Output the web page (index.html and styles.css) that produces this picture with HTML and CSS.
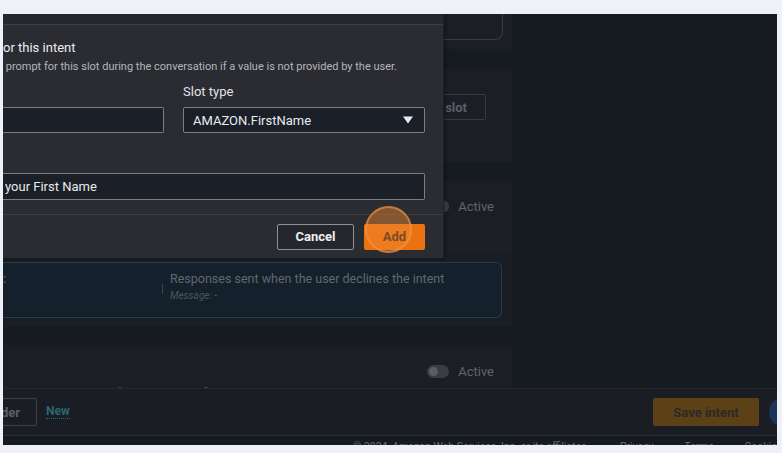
FILE: index.html
```html
<!DOCTYPE html>
<html lang="en">
<head>
<meta charset="utf-8">
<title>Add slot</title>
<link rel="stylesheet" href="styles.css">
</head>
<body>
<div class="frame">
  <div class="content">
    <section class="panel p1"><div class="box1"></div></section>
    <section class="panel p2"><button class="btn-ghost">Add slot</button></section>
    <section class="panel p3">
      <div class="row-active"><span class="toggle"><span class="knob"></span></span><span class="active-label">Active</span></div>
      <div class="p3-lower">
        <div class="resp-box">
          <div class="resp-left">:</div>
          <div class="resp-divider"></div>
          <div class="resp-right">
            <div class="resp-title">Responses sent when the user declines the intent</div>
            <div class="resp-msg">Message: -</div>
          </div>
        </div>
      </div>
    </section>
    <section class="panel p4">
      <div class="row-active"><span class="toggle"><span class="knob"></span></span><span class="active-label">Active</span></div>
      <p class="faint">Use a message of the intent to confirm with the user, or to close the conversation.</p>
    </section>
  </div>

  <div class="footerbar">
    <div class="footer-left">
      <button class="btn-outline">Visual builder</button>
      <span class="new-link">New</span>
    </div>
    <div class="footer-right">
      <button class="btn-save">Save intent</button>
      <span class="help-dot"></span>
    </div>
  </div>
  <div class="legal">© 2024, Amazon Web Services, Inc. or its affiliates. <span>Privacy</span> <span>Terms</span> <span>Cookie preferences</span></div>

  <div class="modal">
    <div class="modal-head"></div>
    <div class="modal-body">
      <h2 class="m-title">or this intent</h2>
      <p class="m-desc">&nbsp;prompt for this slot during the conversation if a value is not provided by the user.</p>
      <div class="m-grid">
        <div class="field">
          <label class="f-label">&nbsp;</label>
          <div class="input"></div>
        </div>
        <div class="field">
          <label class="f-label">Slot type</label>
          <div class="input select">
            <span>AMAZON.FirstName</span>
            <svg class="caret" width="10" height="8" viewBox="0 0 10 8"><path d="M0 0.5 H10 L5 7.5 Z" fill="#e9ebed"/></svg>
          </div>
        </div>
      </div>
      <div class="field wide">
        <div class="input"><span>your First Name</span></div>
      </div>
    </div>
    <div class="modal-foot">
      <button class="btn-cancel">Cancel</button>
      <button class="btn-add">Add</button>
      <span class="click-ring"></span>
    </div>
  </div>
</div>
</body>
</html>
```
FILE: styles.css
```css
* { box-sizing: border-box; }
html, body { margin: 0; padding: 0; }
body {
  background: #eef2f8;
  font-family: Roboto, "Noto Sans", "Liberation Sans", sans-serif;
  width: 782px;
  height: 453px;
  overflow: hidden;
}
button { font-family: inherit; }

.frame {
  position: relative;
  margin: 14px 0 0 3px;
  width: 774px;
  height: 431px;
  background: #161a21;
  overflow: hidden;
}

/* background page */
.content {
  width: 509px;
  display: flex;
  flex-direction: column;
  gap: 19px;
}
.panel { background: #1b1e25; }
.p1 { height: 35px; padding: 0 9px 0 0; }
.box1 {
  height: 26px;
  border: 1px solid #383c44;
  border-top: none;
  border-radius: 0 0 8px 8px;
}
.p2 {
  height: 94px;
  padding: 26px 26px 0 0;
  display: flex;
  justify-content: flex-end;
  align-items: flex-start;
}
.btn-ghost {
  height: 26px;
  padding: 0 18px 0 17px;
  background: transparent;
  border: 1px solid #363a42;
  border-radius: 2px;
  color: #5a5f67;
  font-weight: 700;
  font-size: 13px;
}
.p3 { height: 145px; display: flex; flex-direction: column; }
.row-active {
  display: flex;
  align-items: center;
  justify-content: flex-end;
  gap: 9px;
  padding-right: 18px;
  height: 50px;
  flex: none;
}
.toggle {
  width: 22px;
  height: 13px;
  border-radius: 7px;
  background: #3a3d43;
  position: relative;
  display: inline-block;
}
.knob {
  position: absolute;
  left: 2px; top: 2px;
  width: 9px; height: 9px;
  border-radius: 50%;
  background: #5a5d63;
}
.active-label { color: #60656c; font-size: 13px; }
.p3-lower {
  flex: 1;
  margin-top: 18px;
  border-top: 1px solid #20242b;
  background: #1a1d23;
  padding: 12px 10px 0 0;
}
.resp-box {
  height: 56px;
  background: #14202c;
  border: 1px solid #2a3a4a;
  border-left: none;
  border-radius: 0 6px 6px 0;
  display: flex;
  align-items: flex-start;
}
.resp-left {
  width: 159px;
  color: #6b7178;
  font-size: 13px;
  padding-top: 8px;
}
.resp-divider {
  width: 1px;
  height: 10px;
  margin-top: 21px;
  background: #3a4652;
}
.resp-right { padding: 8px 0 0 7px; }
.resp-title {
  color: #62686f;
  font-size: 12.5px;
  line-height: 16px;
}
.resp-msg {
  color: #4e545b;
  font-size: 10px;
  line-height: 12px;
  font-style: italic;
  margin-top: 3px;
}
.p4 { height: 90px; }
.p4 .row-active { height: 53px; }
.faint {
  margin: -12px 0 0 30px;
  color: #4c5158;
  font-size: 11px;
  line-height: 14px;
}

/* sticky footer */
.footerbar {
  position: absolute;
  left: 0; right: 0;
  top: 374px;
  height: 48px;
  background: #1a1d23;
  border-top: 1px solid #23272e;
  border-bottom: 1px solid #2a2e35;
  display: flex;
  justify-content: space-between;
  align-items: center;
}
.footer-left { display: flex; align-items: center; gap: 9px; margin-left: -80px; }
.btn-outline {
  height: 28px;
  padding: 0 16px;
  background: transparent;
  border: 1px solid #3b3f46;
  border-radius: 2px;
  color: #5b6067;
  font-weight: 700;
  font-size: 13px;
}
.new-link {
  color: #2c6672;
  font-size: 12px;
  font-weight: 700;
  border-bottom: 1px dotted #2c6672;
  line-height: 13px;
}
.footer-right { display: flex; align-items: center; gap: 10px; margin-right: -22px; }
.btn-save {
  width: 106px;
  height: 28px;
  background: #5c4016;
  border: none;
  border-radius: 2px;
  color: #2b2a27;
  font-weight: 700;
  font-size: 13px;
}
.help-dot {
  width: 30px; height: 30px;
  border-radius: 50%;
  background: #1c3459;
}
.legal {
  position: absolute;
  left: 350px;
  top: 426px;
  color: #6a6f77;
  font-size: 10.5px;
  line-height: 14px;
  white-space: nowrap;
}
.legal span { margin-left: 28px; }

/* modal */
.modal {
  position: absolute;
  left: 0; top: 0;
  width: 440px;
  height: 244px;
  background: #2a2c31;
  box-shadow: 1px 0 0 #1f2126, 2px 0 4px rgba(0,0,0,0.4);
  display: flex;
  flex-direction: column;
}
.modal-head {
  height: 11px;
  background: #25272c;
  border-bottom: 1px solid #3b3e44;
}
.modal-body { padding: 0 18px 0 0; flex: 1; border-bottom: 1px solid #3a3d43; }
.m-title {
  margin: 15px 0 0;
  font-size: 13px;
  line-height: 16px;
  font-weight: 400;
  color: #eceef0;
}
.m-desc {
  margin: 4px 0 0;
  font-size: 11px;
  line-height: 14px;
  color: #b2b6bc;
  white-space: nowrap;
}
.m-grid {
  display: grid;
  grid-template-columns: 161px 242px;
  column-gap: 19px;
  margin-top: 10px;
}
.f-label {
  display: block;
  font-size: 13px;
  line-height: 16px;
  font-weight: 400;
  color: #e1e3e6;
  margin-bottom: 7px;
}
.input {
  height: 26px;
  background: #1b1f27;
  border: 1px solid #7a7f87;
  border-radius: 2px;
  display: flex;
  align-items: center;
  color: #e9ebed;
  font-size: 13px;
}
.field:first-child .input { border-left: none; border-radius: 0 2px 2px 0; }
.select { padding: 0 11px 0 9px; justify-content: space-between; }
.wide { margin-top: 40px; }
.wide .input { height: 27px; border-left: none; padding-left: 2px; border-radius: 0 2px 2px 0; }
.modal-foot {
  height: 43px;
  display: flex;
  justify-content: flex-end;
  align-items: center;
  gap: 10px;
  padding-right: 18px;
  position: relative;
}
.btn-cancel {
  width: 77px;
  height: 26px;
  background: #25272c;
  border: 1px solid #8e9299;
  border-radius: 2px;
  color: #eceef0;
  font-weight: 700;
  font-size: 13px;
}
.btn-add {
  width: 61px;
  height: 26px;
  background: #ec7211;
  border: none;
  border-radius: 2px;
  color: #16191f;
  font-weight: 700;
  font-size: 13px;
}
.click-ring {
  position: absolute;
  left: 362px;
  top: -9px;
  width: 47px;
  height: 47px;
  border-radius: 50%;
  background: rgba(240, 135, 50, 0.45);
  border: 2px solid rgba(245, 150, 70, 0.6);
}
```
